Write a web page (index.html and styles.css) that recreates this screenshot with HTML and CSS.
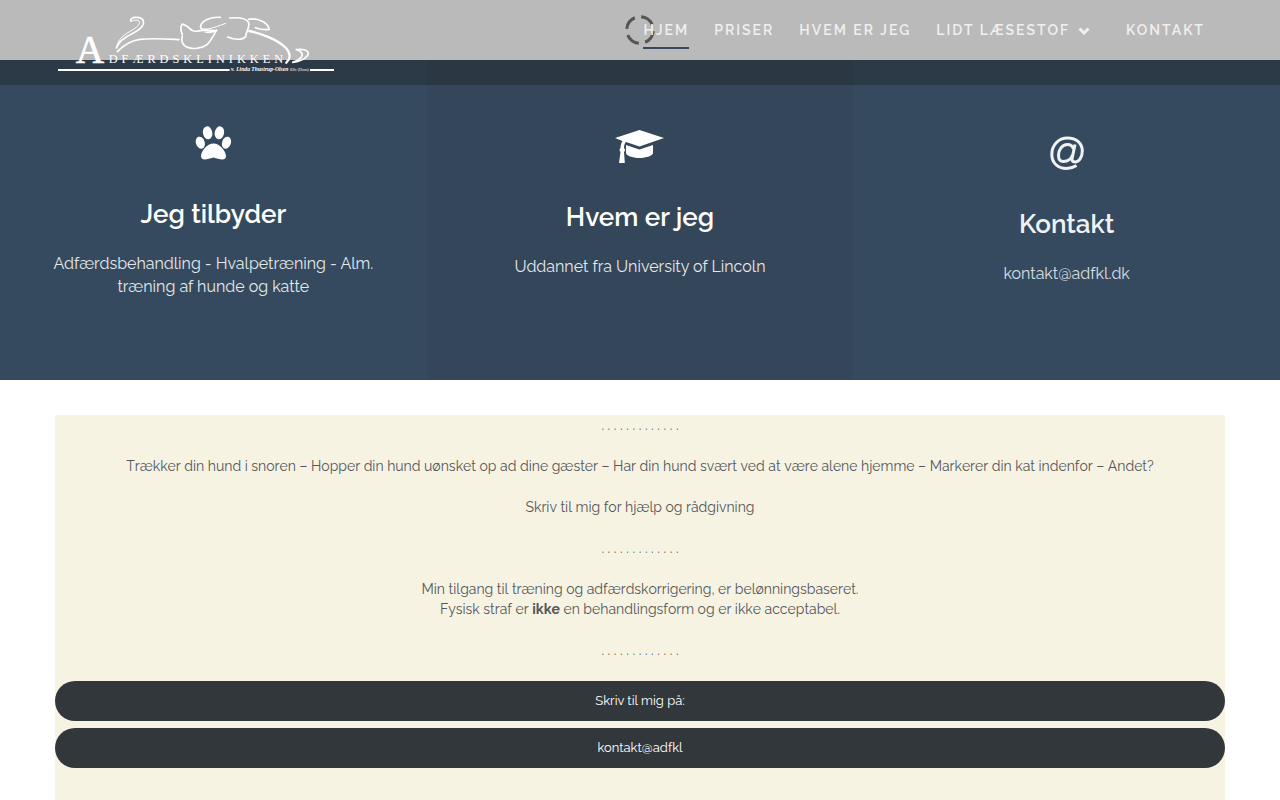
FILE: index.html
```html
<!DOCTYPE html>
<html lang="da">
<head>
<meta charset="utf-8">
<meta name="viewport" content="width=device-width, initial-scale=1">
<title>Adfærdsklinikken</title>
<link rel="stylesheet" href="styles.css">
</head>
<body>
<header class="header">
  <div class="topbar">
    <svg class="spinner" viewBox="0 0 30 30" aria-hidden="true"><circle cx="15" cy="15" r="13.3" pathLength="360" stroke-dasharray="62 28" transform="rotate(5 15 15)"/></svg>
    <a class="logo" href="#" aria-label="Adfærdsklinikken">
      <svg viewBox="45 39 846 180">
        <g class="logo-lines">
          <path d="M272 63C268 50 304 47 310 63C315 77 300 88 282 98C252 112 234 128 229 144"/>
          <path class="thin" d="M273 64C288 57 302 60 298 71C292 85 262 96 246 111C237 120 232 132 230 140"/>
          <path d="M232 155C250 136 276 121 300 118C340 114 380 117 417 119"/>
          <path d="M427 104C420 88 423 78 427 72C437 75 446 81 455 91Q465 96 480 92"/>
          <path d="M427 108C422 122 428 136 440 141C458 149 485 146 502 133C512 124 520 106 530 91"/>
          <path d="M480 92C500 88 515 93 530 91C518 98 507 98 496 96"/>
          <path d="M541 52C510 50 485 63 482 78C480 88 488 89 500 88"/>
          <path class="thin" d="M500 88C522 84 540 76 557 70"/>
          <path d="M569 54C592 52 618 54 625 66C632 82 616 96 618 108C610 122 582 119 563 111"/>
          <path d="M626 58C648 52 683 66 688 88C674 90 658 87 646 83"/>
          <path class="thick" d="M628 93C662 100 712 118 738 144C754 162 750 178 739 188"/>
          <path d="M769 149C802 145 809 157 802 167C794 178 774 186 758 187C776 180 790 171 786 161Q782 152 769 149"/>
        </g>
        <path class="rule" d="M54 210H569M810 210H882"/>
        <text class="logo-a" x="107" y="189">A</text>
        <text class="logo-name" x="206" y="189">DFÆRDSKLINIKKEN</text>
        <text class="logo-by" x="573" y="214">v. Linda Thustrup-Olsen</text>
        <text class="logo-deg" x="750" y="213">BSc (Hons)</text>
      </svg>
    </a>
    <nav class="nav">
      <a class="nav-link active" href="#">HJEM</a>
      <a class="nav-link" href="#">PRISER</a>
      <a class="nav-link" href="#">HVEM ER JEG</a>
      <a class="nav-link" href="#">LIDT LÆSESTOF<svg class="chevron" viewBox="0 0 12 8" aria-hidden="true"><path d="M1.500 1.500L6 6L10.500 1.500"/></svg></a>
      <a class="nav-link" href="#">KONTAKT</a>
    </nav>
  </div>
</header>
<main>
  <section class="features">
    <article class="feature feature-first">
      <svg class="icon" viewBox="0 0 50 50" aria-hidden="true">
        <ellipse cx="19.600" cy="14.800" rx="4.700" ry="6.500" transform="rotate(-10 19.600 14.800)"/>
        <ellipse cx="31.400" cy="14.800" rx="4.700" ry="6.500" transform="rotate(10 31.400 14.800)"/>
        <ellipse cx="12.300" cy="24.700" rx="4.400" ry="6.200" transform="rotate(-18 12.300 24.700)"/>
        <ellipse cx="38.500" cy="24.700" rx="4.400" ry="6.200" transform="rotate(18 38.500 24.700)"/>
        <path d="M25.500 25.500C32 25.500 38 33.500 38 38C38 43 32 41.500 25.500 39.500C19 41.500 13 43 13 38C13 33.500 19 25.500 25.500 25.500Z"/>
      </svg>
      <h2>Jeg tilbyder</h2>
      <p>Adfærdsbehandling - Hvalpetræning - Alm. træning af hunde og katte</p>
    </article>
    <article class="feature feature-second">
      <svg class="icon" viewBox="0 0 50 50" aria-hidden="true">
        <path d="M24.500 9L49 17L24.500 25.500L11 21C9.500 22.500 9 25 9 27Q11 29 9 31L9.800 42H4L5.500 31Q3.500 29 5.500 27C5.500 24 6.500 21.500 7.500 20L0 17Z"/>
        <path d="M11 24L24.500 28.500L38 24V32C38 34.500 31.500 37 24.500 37S11 34.500 11 32Z"/>
      </svg>
      <h2>Hvem er jeg</h2>
      <p>Uddannet fra University of Lincoln</p>
    </article>
    <article class="feature feature-third">
      <svg class="icon icon-at" viewBox="0 0 50 50" aria-hidden="true">
        <path d="M34.500 37.500C31 39.800 28 40.500 24.500 40.500C15.500 40.500 9.800 34.500 9.800 26.500C9.800 17 16.500 10 25.500 10C34.500 10 40.300 15.500 40.300 23C40.300 30 36.500 34 33 34C30 34 29.800 32 30.200 30L33 16.500"/>
        <path d="M31.500 21C30.500 17.800 28.500 16.500 25.500 16.500C20 16.500 16.500 22 16.500 27.500C16.500 31.500 18.500 33.500 21.500 33.500C26 33.500 29.500 30.500 30.500 27"/>
      </svg>
      <h2>Kontakt</h2>
      <p>kontakt@adfkl.dk</p>
    </article>
  </section>
  <section class="intro">
    <p>. . . . . . . . . . . . .</p>
    <p>Trækker din hund i snoren – Hopper din hund uønsket op ad dine gæster – Har din hund svært ved at være alene hjemme – Markerer din kat indenfor – Andet?</p>
    <p>Skriv til mig for hjælp og rådgivning</p>
    <p>. . . . . . . . . . . . .</p>
    <p>Min tilgang til træning og adfærdskorrigering, er belønningsbaseret.<br>Fysisk straf er <strong>ikke</strong> en behandlingsform og er ikke acceptabel.</p>
    <p>. . . . . . . . . . . . .</p>
    <div class="actions">
      <a class="button" href="#">Skriv til mig på:</a>
      <a class="button" href="#">kontakt@adfkl</a>
    </div>
  </section>
</main>
</body>
</html>
```
FILE: styles.css
```css
* { box-sizing: border-box; }
body {
  margin: 0;
  background: #fff;
  color: #54575a;
  font: 14px/20px Raleway, Lato, sans-serif;
}
a { color: inherit; text-decoration: none; }

.header {
  position: absolute;
  inset: 0 0 auto;
  z-index: 1;
  height: 85px;
  background: rgba(30, 35, 35, .4);
}
.topbar {
  display: flex;
  justify-content: space-between;
  height: 60px;
  padding: 0 75px 0 55px;
  background: #bababa;
}
.spinner {
  position: absolute;
  top: 15px;
  left: calc(50% - 15px);
  width: 30px;
  height: 30px;
  fill: none;
  stroke: #555;
  stroke-width: 3;
}
.logo { padding-top: 13px; }
.logo svg { display: block; width: 282px; height: 60px; }
.logo-lines { fill: none; stroke: #fff; stroke-width: 5; stroke-linecap: round; stroke-linejoin: round; }
.logo-lines .thin { stroke-width: 3; }
.logo-lines .thick { stroke-width: 7; }
.rule { stroke: #fff; stroke-width: 6; }
.logo text { fill: #fff; font-family: "Liberation Serif", serif; }
.logo .logo-a { font-size: 118px; stroke: #fff; stroke-width: 2; }
.logo .logo-name { font-size: 37px; letter-spacing: 12px; }
.logo .logo-by { font-size: 17px; font-style: italic; font-weight: bold; }
.logo .logo-deg { font-size: 12px; }

.nav {
  position: relative;
  display: flex;
  gap: 25px;
  padding-top: 20px;
  color: #f0f0f0;
  font-size: 14px;
  font-weight: 600;
  letter-spacing: 2px;
  white-space: nowrap;
}
.nav-link { height: 29px; }
.active { border-bottom: 2px solid #354a5e; }
.chevron {
  width: 12px;
  height: 8px;
  margin: 0 11px 0 8px;
  fill: none;
  stroke: currentColor;
  stroke-width: 3;
}

.features {
  display: grid;
  grid-template-columns: repeat(3, 1fr);
  min-height: 380px;
  background: #354a5e;
  color: #fff;
  text-align: center;
}
.feature { padding: 118px 50px 60px; }
.feature-second { padding-top: 121px; background: #34465a; }
.feature-third { padding-top: 128px; color: #f0f2f4; }
.icon { display: block; width: 50px; height: 50px; margin: 0 auto; fill: currentColor; }
.icon-at { fill: none; stroke: currentColor; stroke-width: 3; }
.feature h2 { margin: 30px 0 22px; font-size: 26px; line-height: 32px; font-weight: 600; }
.feature p { margin: 0; font-size: 16px; line-height: 23px; opacity: .88; }

.intro {
  margin: 35px 55px 0;
  padding-bottom: 60px;
  border-radius: 2px;
  background: #f7f3e3;
  text-align: center;
  font-kerning: none;
}
.intro p { margin: 0 0 21px; }
.intro strong { font-weight: 700; }
.actions { display: grid; gap: 7px; }
.button {
  padding: 10px 20px;
  border-radius: 20px;
  background: #32373c;
  color: #fff;
  font-size: 13px;
  font-kerning: auto;
}
```
